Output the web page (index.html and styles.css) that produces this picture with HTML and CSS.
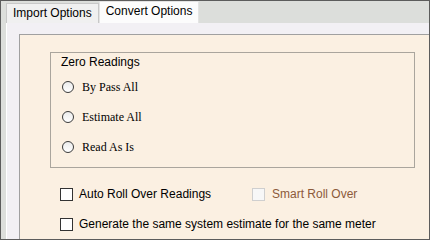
FILE: index.html
```html
<!DOCTYPE html>
<html lang="en">
<head>
  <meta charset="UTF-8">
  <title>Convert Options</title>
  <link rel="stylesheet" href="styles.css">
</head>
<body>
  <div class="window">
    <!-- Tabs -->
    <div class="tabs">
      <div class="tab">Import Options</div>
      <div class="tab active">Convert Options</div>
    </div>

    <div class="page">
      <div class="panel">
        <div class="group">
          <div class="group-title">Zero Readings</div>
          <label class="radio-row"><input type="radio" name="zero"><span>By Pass All</span></label>
          <label class="radio-row"><input type="radio" name="zero"><span>Estimate All</span></label>
          <label class="radio-row"><input type="radio" name="zero"><span>Read As Is</span></label>
        </div>

        <div class="checks">
          <div class="check-line">
            <label class="check-row first"><input type="checkbox"><span>Auto Roll Over Readings</span></label>
            <label class="check-row disabled"><input type="checkbox" disabled><span>Smart Roll Over</span></label>
          </div>
          <div class="check-line">
            <label class="check-row"><input type="checkbox"><span>Generate the same system estimate for the same meter</span></label>
          </div>
        </div>
      </div>
    </div>
  </div>
</body>
</html>
```
FILE: styles.css
```css
/* General */
body {
  margin: 0;
  padding: 0;
  font-family: "Liberation Sans", Arial, sans-serif;
  font-size: 12px;
  color: #000;
}

.window {
  width: 430px;
  height: 240px;
  box-sizing: border-box;
  border: 1px solid #5c5c5c;
  background-color: #dcdedb;
  display: flex;
  flex-direction: column;
  overflow: hidden;
}

/* Tabs */
.tabs {
  display: flex;
  align-items: flex-end;
  height: 22px;
  padding-left: 5px;
  flex-shrink: 0;
}

.tab {
  box-sizing: border-box;
  height: 20px;
  padding: 2px 6px 0;
  line-height: 14px;
  border: 1px solid #c8c8c8;
  border-bottom: none;
  background-color: #f0f0f0;
}

.tab.active {
  height: 22px;
  background-color: #fcfcfc;
  border-color: #e4e4e4;
}

/* Tab page */
.page {
  flex: 1;
  margin-left: 5px;
  border-left: 1px solid #ffffff;
  background-color: #f2f0f4;
  padding: 11px 0 0 12px;
  display: flex;
  min-height: 0;
}

.panel {
  flex: 1;
  background-color: #fbf0e2;
  border-top: 1px solid #a0a0a0;
  border-left: 1px solid #a0a0a0;
  padding: 17px 0 0 30px;
}

/* Group box */
.group {
  width: 365px;
  height: 116px;
  box-sizing: border-box;
  border: 1px solid #aaa59d;
  padding: 2px 0 0 10px;
}

.group-title {
  line-height: 14px;
  margin-bottom: 3px;
}

.radio-row {
  display: flex;
  align-items: center;
  height: 30px;
  font-family: "Liberation Serif", "Times New Roman", serif;
  font-size: 12px;
}

.radio-row input {
  appearance: none;
  -webkit-appearance: none;
  width: 12px;
  height: 12px;
  margin: 0 8px 0 1px;
  border: 1px solid #3a3a3a;
  border-radius: 50%;
  background: linear-gradient(#ececec, #ffffff);
  box-sizing: border-box;
}

/* Checkboxes */
.checks {
  margin: 11px 0 0 10px;
}

.check-line {
  display: flex;
  height: 30px;
}

.check-row {
  display: flex;
  align-items: center;
}

.check-row.first {
  width: 192px;
}

.check-row input {
  appearance: none;
  -webkit-appearance: none;
  width: 13px;
  height: 13px;
  margin: 0 6px 0 0;
  border: 1px solid #333333;
  background-color: #ffffff;
  box-sizing: border-box;
}

.check-row.disabled {
  color: #8c5a3a;
}

.check-row.disabled input {
  border-color: #cfcfcf;
  background-color: #f7f7f7;
  margin-right: 7px;
}
```
